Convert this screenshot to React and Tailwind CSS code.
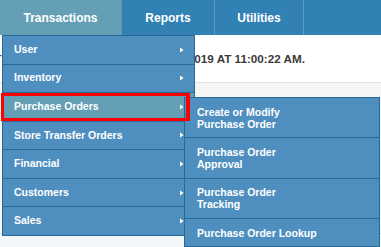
import React from "react";

function Arrow() {
  return (
    <svg width="4" height="6" viewBox="0 0 4 6" className="shrink-0">
      <path d="M0 0.5 L3.5 3 L0 5.5 Z" fill="#ffffff" />
    </svg>
  );
}

const items = [
  "User",
  "Inventory",
  "Purchase Orders",
  "Store Transfer Orders",
  "Financial",
  "Customers",
  "Sales",
];

const subItems = [
  ["Create or Modify", "Purchase Order"],
  ["Purchase Order", "Approval"],
  ["Purchase Order", "Tracking"],
  ["Purchase Order Lookup"],
];

export default function App() {
  return (
    <div className="relative w-[381px] h-[247px] overflow-hidden bg-[#f3f7fa] font-['Liberation_Sans',Arial,sans-serif]">
      <nav className="flex h-[35px] bg-[#3181b4] text-white text-[12px] font-bold">
        <div className="w-[121px] bg-[#659fb5] flex items-center justify-center">Transactions</div>
        <div className="w-px bg-[#5b9ccb]" />
        <div className="w-[92px] flex items-center justify-center">Reports</div>
        <div className="w-px bg-[#5b9ccb]" />
        <div className="w-[88px] flex items-center justify-center">Utilities</div>
        <div className="w-px bg-[#5b9ccb]" />
      </nav>

      <div className="h-[48px] bg-white border-b border-[#e2e1de] flex items-center justify-end pr-[76px]">
        <p className="whitespace-nowrap text-[11.7px] font-bold text-[#3b3b3b]">
          LAST LOGIN: MONDAY, DECEMBER 2, 2019 AT 11:00:22 AM.
        </p>
      </div>

      <div className="h-[151px] bg-[#f5f5f3] border-b border-[#dedede]" />

      {/* Dropdown menu */}
      <div className="absolute left-[2px] top-[35px] w-[193px] border-x border-t border-[#2a6896] bg-[#4f8fc0] text-white text-[10.5px] font-bold">
        {items.map((label) => (
          <div
            key={label}
            className={
              "h-[28.57px] border-b border-[#2a6896] flex items-center justify-between pl-[11px] pr-[10px] " +
              (label === "Purchase Orders" ? "bg-[#659fb5]" : "")
            }
          >
            <span>{label}</span>
            <Arrow />
          </div>
        ))}
      </div>

      {/* Submenu */}
      <div className="absolute left-[184px] top-[97px] w-[196px] border-x border-t border-[#2a6896] bg-[#4f8fc0] text-white text-[10.5px] font-bold leading-[12px]">
        {subItems.map((lines, i) => (
          <div
            key={i}
            className={
              "border-b border-[#2a6896] flex flex-col justify-center pl-[12px] " +
              (lines.length > 1 ? "h-[40.3px]" : "h-[28.6px]")
            }
          >
            {lines.map((l) => (
              <span key={l}>{l}</span>
            ))}
          </div>
        ))}
      </div>

      {/* Highlight annotation */}
      <div className="absolute left-[1px] top-[93px] w-[189px] h-[28px] border-[3px] border-r-[4px] border-[#ff0000]" />
    </div>
  );
}
